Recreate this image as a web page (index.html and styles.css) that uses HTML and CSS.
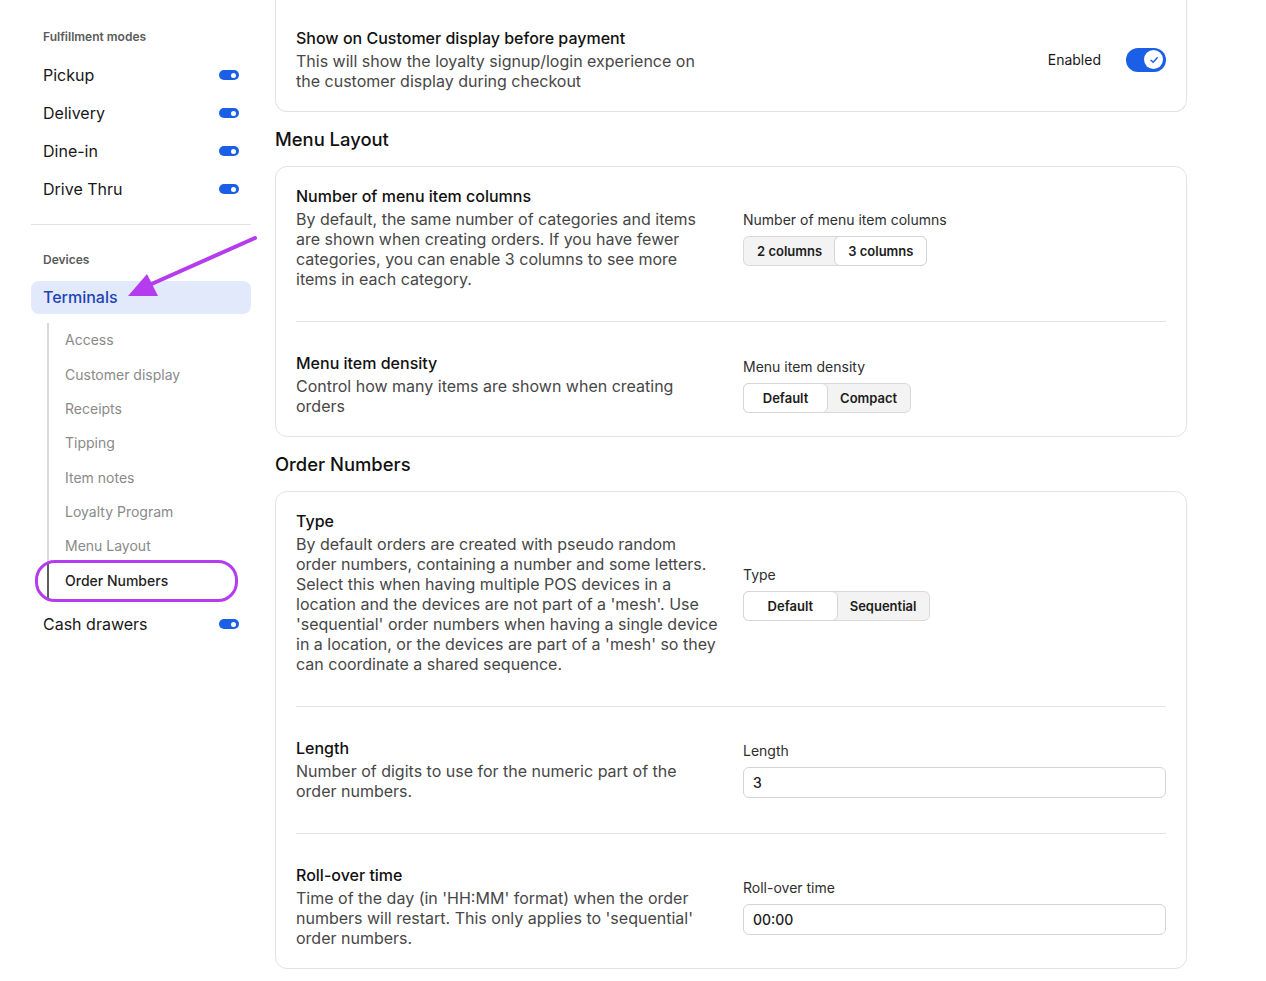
FILE: index.html
```html
<!DOCTYPE html>
<html lang="en">
<head>
<meta charset="utf-8">
<title>Terminals – Order Numbers</title>
<link rel="stylesheet" href="styles.css">
</head>
<body>
<div class="page">
  <aside class="sidebar">
    <div class="side-label">Fulfillment modes</div>
    <div class="side-row"><span>Pickup</span><span class="mini-toggle"></span></div>
    <div class="side-row"><span>Delivery</span><span class="mini-toggle"></span></div>
    <div class="side-row"><span>Dine-in</span><span class="mini-toggle"></span></div>
    <div class="side-row"><span>Drive Thru</span><span class="mini-toggle"></span></div>
    <hr class="side-divider">
    <div class="side-label">Devices</div>
    <div class="side-active">Terminals</div>
    <ul class="sub-list">
      <li class="sub-item">Access</li>
      <li class="sub-item">Customer display</li>
      <li class="sub-item">Receipts</li>
      <li class="sub-item">Tipping</li>
      <li class="sub-item">Item notes</li>
      <li class="sub-item">Loyalty Program</li>
      <li class="sub-item">Menu Layout</li>
      <li class="sub-item sub-item--active">Order Numbers<span class="highlight-ring"></span></li>
    </ul>
    <div class="side-row"><span>Cash drawers</span><span class="mini-toggle"></span></div>
    <svg class="annotation-arrow" width="140" height="80" viewBox="0 0 140 80" aria-hidden="true">
      <line x1="138" y1="2" x2="30" y2="50" stroke="#b53bee" stroke-width="4" stroke-linecap="round"/>
      <polygon points="11,60 30,38 41,60" fill="#b53bee"/>
    </svg>
  </aside>

  <main class="main">
    <section class="card card--cut">
      <div class="row-flex">
        <div class="text-col">
          <div class="item-title">Show on Customer display before payment</div>
          <div class="item-desc">This will show the loyalty signup/login experience on the customer display during checkout</div>
        </div>
        <div class="enabled">
          <span>Enabled</span>
          <span class="toggle">
            <span class="knob">
              <svg width="10" height="10" viewBox="0 0 10 10"><path d="M2 5.2 L4.2 7.3 L8.2 2.8" fill="none" stroke="#1b5fe6" stroke-width="1.4" stroke-linecap="round" stroke-linejoin="round"/></svg>
            </span>
          </span>
        </div>
      </div>
    </section>

    <h2 class="section-title">Menu Layout</h2>
    <section class="card">
      <div class="row">
        <div class="text-col">
          <div class="item-title">Number of menu item columns</div>
          <div class="item-desc">By default, the same number of categories and items are shown when creating orders. If you have fewer categories, you can enable 3 columns to see more items in each category.</div>
        </div>
        <div class="control-col">
          <div class="control-label">Number of menu item columns</div>
          <div class="segmented">
            <span class="seg">2 columns</span>
            <span class="seg seg--on">3 columns</span>
          </div>
        </div>
      </div>
      <hr class="row-divider">
      <div class="row">
        <div class="text-col">
          <div class="item-title">Menu item density</div>
          <div class="item-desc">Control how many items are shown when creating orders</div>
        </div>
        <div class="control-col">
          <div class="control-label">Menu item density</div>
          <div class="segmented">
            <span class="seg seg--on">Default</span>
            <span class="seg">Compact</span>
          </div>
        </div>
      </div>
    </section>

    <h2 class="section-title">Order Numbers</h2>
    <section class="card">
      <div class="row">
        <div class="text-col">
          <div class="item-title">Type</div>
          <div class="item-desc">By default orders are created with pseudo random order numbers, containing a number and some letters. Select this when having multiple POS devices in a location and the devices are not part of a 'mesh'. Use 'sequential' order numbers when having a single device in a location, or the devices are part of a 'mesh' so they can coordinate a shared sequence.</div>
        </div>
        <div class="control-col">
          <div class="control-label">Type</div>
          <div class="segmented">
            <span class="seg seg--on">Default</span>
            <span class="seg">Sequential</span>
          </div>
        </div>
      </div>
      <hr class="row-divider">
      <div class="row">
        <div class="text-col">
          <div class="item-title">Length</div>
          <div class="item-desc">Number of digits to use for the numeric part of the order numbers.</div>
        </div>
        <div class="control-col">
          <div class="control-label">Length</div>
          <div class="input">3</div>
        </div>
      </div>
      <hr class="row-divider">
      <div class="row">
        <div class="text-col">
          <div class="item-title">Roll-over time</div>
          <div class="item-desc">Time of the day (in 'HH:MM' format) when the order numbers will restart. This only applies to 'sequential' order numbers.</div>
        </div>
        <div class="control-col">
          <div class="control-label">Roll-over time</div>
          <div class="input">00:00</div>
        </div>
      </div>
    </section>
  </main>
</div>
</body>
</html>
```

FILE: styles.css
```css
* { box-sizing: border-box; }

html, body {
  margin: 0;
  padding: 0;
  background: #ffffff;
  overflow: hidden;
}

body {
  font-family: Inter, "Noto Sans", "Liberation Sans", sans-serif;
  color: #171717;
  -webkit-font-smoothing: antialiased;
}

.page {
  display: flex;
  gap: 24px;
  padding-left: 31px;
  align-items: flex-start;
}

/* ---------- Sidebar ---------- */
.sidebar {
  position: relative;
  width: 220px;
  flex: none;
  padding-top: 18px;
}

.side-label {
  height: 38px;
  line-height: 38px;
  padding-left: 12px;
  font-size: 12px;
  font-weight: 600;
  color: #5a5a5a;
}

.side-row {
  height: 38px;
  display: flex;
  align-items: center;
  justify-content: space-between;
  padding: 0 12px;
  font-size: 16px;
  color: #171717;
}

.mini-toggle {
  position: relative;
  width: 20px;
  height: 10px;
  border-radius: 5px;
  background: #1b5fe6;
}

.mini-toggle::after {
  content: "";
  position: absolute;
  right: 3px;
  top: 2.5px;
  width: 5px;
  height: 5px;
  border-radius: 50%;
  background: #ffffff;
}

.side-divider {
  border: 0;
  border-top: 1px solid #e2e2e2;
  margin: 16px 0 16px;
}

.side-active {
  margin-top: 2px;
  height: 33px;
  line-height: 33px;
  padding-left: 12px;
  border-radius: 8px;
  background: #e2e9fb;
  color: #1d44b3;
  font-size: 16px;
  font-weight: 500;
}

.sub-list {
  list-style: none;
  margin: 9px 0 7px 16px;
  padding: 0;
}

.sub-item {
  position: relative;
  padding: 7.2px 0 7.2px 16px;
  line-height: 20px;
  font-size: 14px;
  color: #8a8a8a;
  border-left: 2px solid #d9d9d9;
}

.sub-item--active {
  color: #1f1f1f;
  font-weight: 500;
  border-left-color: #5e5e5e;
}

.highlight-ring {
  position: absolute;
  left: -14px;
  right: 13px;
  top: -4px;
  bottom: -4px;
  border: 3px solid #b53bee;
  border-radius: 20px;
  pointer-events: none;
}

.annotation-arrow {
  position: absolute;
  left: 86px;
  top: 236px;
  overflow: visible;
}

/* ---------- Main ---------- */
.main {
  width: 912px;
  flex: none;
}

.card {
  border: 1px solid #e2e2e2;
  border-radius: 12px;
  padding: 19px 20px 20px;
}

.card--cut {
  border-top: 0;
  border-top-left-radius: 0;
  border-top-right-radius: 0;
  padding-top: 28px;
}

.section-title {
  margin: 13px 0 13px;
  font-size: 18.4px;
  line-height: 28px;
  font-weight: 500;
  color: #111111;
}

.row-flex {
  display: flex;
  align-items: center;
  justify-content: space-between;
}

.row {
  display: grid;
  grid-template-columns: 423px 1fr;
  gap: 24px;
  align-items: center;
}

.text-col {
  width: 423px;
}

.item-title {
  font-size: 16px;
  line-height: 20px;
  font-weight: 500;
  color: #111111;
  margin-bottom: 3px;
}

.item-desc {
  font-size: 16px;
  line-height: 20px;
  color: #474747;
}

.row-divider {
  border: 0;
  border-top: 1px solid #e2e2e2;
  margin: 32px 0 31px;
}

.enabled {
  display: flex;
  align-items: center;
  gap: 25px;
  font-size: 14px;
  color: #171717;
}

.toggle {
  position: relative;
  width: 40px;
  height: 24px;
  border-radius: 12px;
  background: #1b5fe6;
  display: flex;
  align-items: center;
  justify-content: flex-end;
  padding-right: 3px;
}

.knob {
  width: 19px;
  height: 19px;
  border-radius: 50%;
  background: #ffffff;
  display: flex;
  align-items: center;
  justify-content: center;
}

.control-col {
  display: flex;
  flex-direction: column;
  align-items: flex-start;
  gap: 6px;
}

.control-label {
  font-size: 14px;
  line-height: 20px;
  color: #2e2e2e;
}

.segmented {
  display: inline-grid;
  grid-auto-flow: column;
  grid-auto-columns: 1fr;
  background: #f3f3f3;
  border: 1px solid #d9d9d9;
  border-radius: 6px;
  height: 30px;
}

.seg {
  display: flex;
  align-items: center;
  justify-content: center;
  padding: 0 13px;
  font-size: 13px;
  font-weight: 600;
  color: #1c1c1c;
  white-space: nowrap;
}

.seg--on {
  background: #ffffff;
  border: 1px solid #d6d6d6;
  border-radius: 6px;
  margin: -1px;
}

.input {
  width: 100%;
  height: 31px;
  border: 1px solid #d4d4d4;
  border-radius: 6px;
  padding: 0 9px;
  display: flex;
  align-items: center;
  font-size: 14px;
  font-weight: 500;
  color: #1c1c1c;
}
```
